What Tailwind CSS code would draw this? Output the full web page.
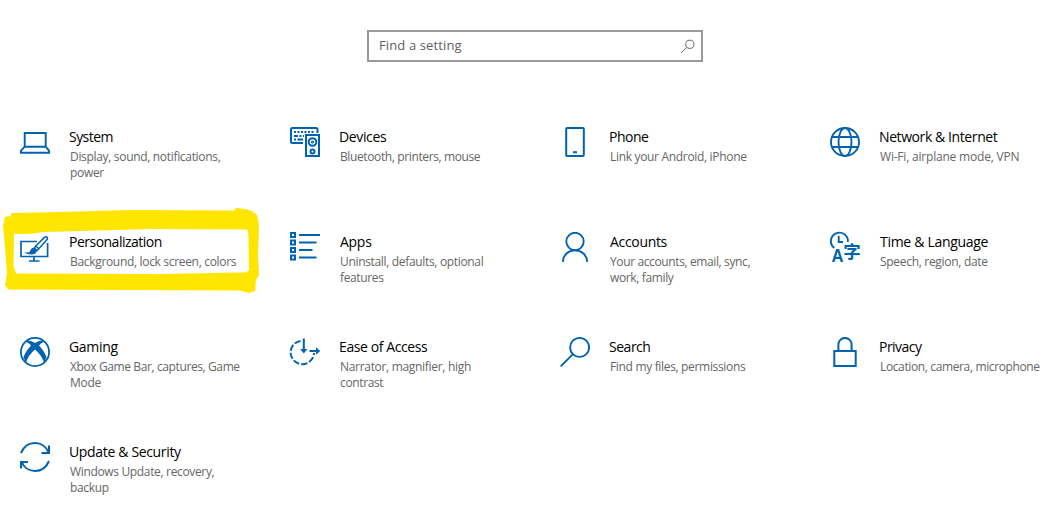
<!DOCTYPE html>
<html lang="en">
<head>
<meta charset="utf-8">
<title>Settings</title>
<script src="https://cdn.jsdelivr.net/npm/@tailwindcss/browser@4"></script>
</head>
<body class="relative h-[510px] w-[1048px] overflow-hidden bg-white font-['Open_Sans','Noto_Sans',sans-serif] text-black">
<svg class="absolute left-0 top-[200px]" width="270" height="100" viewBox="0 0 270 100"><path fill="#ffe600" fill-rule="evenodd" d="M11 14 Q12 12.500 16 13 L77 11.500 L130 10 L234 10.500 L236 8 L245 9 L252 11 L257 15 L259 24 L258 55 L259 75 L256 80 L255 91 L249 93 L240 90.500 L8 89.500 L5 85 L7 73 L5 48 L3 26 L5 17 L11 16Z M14 33.500 Q30 35 43 32 L82 31 L150 29 L247 29.500 Q249 32 248.500 45 L249 70 Q247 73 240 72.500 L160 74 L16 73.500 L13.500 66Z"/></svg>
<main class="relative flex flex-col">
  <label class="mt-[30px] ml-[367px] flex h-8 w-[336px] items-center justify-between border-2 border-[#999] pr-[6px] pl-[10px]">
    <span class="text-[13px] tracking-[0.12px] text-[#606060]">Find a setting</span>
    <svg width="15" height="15" viewBox="0 0 15 15" fill="none" stroke="#666" stroke-width="1"><circle cx="9.800" cy="5.300" r="4.100"/><path d="M6.800 8.300 1.300 13.800"/></svg>
  </label>
  <div class="mt-[65px] ml-5 grid grid-cols-[repeat(4,270px)] grid-rows-[105px_105px_105px_68px]">
    <section class="flex gap-[19px]">
      <svg class="size-[30px] shrink-0" viewBox="0 0 30 30" fill="none" stroke="#0063b1" stroke-width="1.900"><path d="M4.700 20V6h21v14M4.700 19.700h21L29 23.600v2.200H1v-2.200Z"/></svg>
      <div><h2 class="text-[14px] leading-5 tracking-[-0.55px]">System</h2><p class="mt-[2px] pl-px text-[12px] leading-4 tracking-[-0.32px] text-[#666]">Display, sound, notifications,<br>power</p></div>
    </section>
    <section class="flex gap-[19px]">
      <svg class="size-[30px] shrink-0" viewBox="0 0 30 30" fill="none" stroke="#0063b1" stroke-width="2"><path d="M13 16H2.500Q1 16 1 14.500v-12Q1 1 2.500 1H26q1.500 0 1.500 1.500V6"/><path d="M4 5h2m1.500 0h2m1.500 0h2m1.500 0h2m1.500 0h2m1.500 0h2M4 9h4m1.500 0h2m1.500 0h1M4 12.500h2m1.500 0H13"/><path d="M16 8h13v21H16z"/><circle cx="22.500" cy="15" r="3.800"/><circle cx="22.500" cy="15" r=".6"/><circle cx="22.500" cy="24.500" r="2"/></svg>
      <div><h2 class="text-[14px] leading-5 tracking-[-0.37px]">Devices</h2><p class="mt-[2px] pl-px text-[12px] leading-4 tracking-[-0.38px] text-[#666]">Bluetooth, printers, mouse</p></div>
    </section>
    <section class="flex gap-[19px]">
      <svg class="size-[30px] shrink-0" viewBox="0 0 30 30" fill="none" stroke="#0063b1" stroke-width="2"><rect x="6.200" y="1" width="17.600" height="28" rx="1"/><path d="M13 25.200h4"/></svg>
      <div><h2 class="text-[14px] leading-5 tracking-[-0.48px]">Phone</h2><p class="mt-[2px] pl-px text-[12px] leading-4 tracking-[-0.32px] text-[#666]">Link your Android, iPhone</p></div>
    </section>
    <section class="flex gap-[19px]">
      <svg class="size-[30px] shrink-0" viewBox="0 0 30 30" fill="none" stroke="#0063b1" stroke-width="1.900"><circle cx="15" cy="15" r="14"/><ellipse cx="15" cy="15" rx="6.500" ry="14"/><path d="M2 10h26M2 20h26"/></svg>
      <div><h2 class="text-[14px] leading-5 tracking-[-0.41px]">Network &amp; Internet</h2><p class="mt-[2px] pl-px text-[12px] leading-4 tracking-[-0.2px] text-[#666]">Wi-Fi, airplane mode, VPN</p></div>
    </section>
    <section class="flex gap-[19px]">
      <svg class="size-[30px] shrink-0" viewBox="0 0 30 30" fill="none" stroke="#0063b1" stroke-width="1.700"><path d="M17 9.500H1V24.500h26.600V11M14 24.500v4M9 29h10.500"/><path stroke-width="1.500" d="m15.800 14 8.400-8.400q1.700-1.500 2.800-.4t-.3 2.900l-7.900 8.700z"/><path stroke-width="1.500" d="m15.800 14-1.500 2.200 2.600 2.600 2-2"/><path fill="#0063b1" stroke="none" d="M4 20.500h4.500q1.500-.5 2-2.500 1-2.500 3.500-2.300 3 .5 2.800 3.300-.8 3.500-5.300 3.500-4.500 0-7.500-2"/></svg>
      <div><h2 class="text-[14px] leading-5 tracking-[-0.51px]">Personalization</h2><p class="mt-[2px] pl-px text-[12px] leading-4 tracking-[-0.32px] text-[#666]">Background, lock screen, colors</p></div>
    </section>
    <section class="flex gap-[19px]">
      <svg class="size-[30px] shrink-0" viewBox="0 0 30 30" fill="none" stroke="#0063b1" stroke-width="2"><path d="M1 1h4v4H1zM1 8.500h4v4H1zM1 16h4v4H1zM1 23.500h4v4H1zM9 2.900h21M9 10.400h17.500M9 17.900h13.500M9 25.400h17.500"/></svg>
      <div><h2 class="pl-px text-[14px] leading-5 tracking-[-0.28px]">Apps</h2><p class="mt-[2px] pl-px text-[12px] leading-4 tracking-[-0.33px] text-[#666]">Uninstall, defaults, optional<br><span class="tracking-[-0.37px]">features</span></p></div>
    </section>
    <section class="flex gap-[19px]">
      <svg class="size-[30px] shrink-0" viewBox="0 0 30 30" fill="none" stroke="#0063b1" stroke-width="1.900"><circle cx="15" cy="9.500" r="8.700"/><path d="M2.900 30C3 23 8.500 18.200 15 18.200S27 23 27.100 30"/></svg>
      <div><h2 class="pl-px text-[14px] leading-5 tracking-[-0.32px]">Accounts</h2><p class="mt-[2px] pl-px text-[12px] leading-4 tracking-[-0.38px] text-[#666]">Your accounts, email, sync,<br><span class="tracking-[-0.36px]">work, family</span></p></div>
    </section>
    <section class="flex gap-[19px]">
      <svg class="size-[30px] shrink-0 overflow-visible" viewBox="0 0 30 30" fill="none" stroke="#0063b1" stroke-width="1.900"><path d="M4.300 16A8.500 8.500 0 1 1 17.900 10M8.700 4v6H13"/><text x="1.500" y="30" textLength="12" lengthAdjust="spacingAndGlyphs" fill="#0063b1" stroke="none" font-family="Liberation Sans" font-weight="700" font-size="17.500">A</text><text x="13.300" y="26" fill="#0063b1" stroke="none" font-family="Noto Sans CJK SC" font-weight="700" font-size="17.500">字</text></svg>
      <div><h2 class="pl-px text-[14px] leading-5 tracking-[-0.3px]">Time &amp; Language</h2><p class="mt-[2px] pl-px text-[12px] leading-4 tracking-[-0.3px] text-[#666]">Speech, region, date</p></div>
    </section>
    <section class="flex gap-[19px]">
      <svg class="size-[30px] shrink-0" viewBox="0 0 30 30" fill="none" stroke="#0063b1" stroke-width="1.800"><circle cx="15" cy="15" r="14.100"/><path fill="#0063b1" stroke="none" d="M7 3.500Q11 3 15 6q4-3 8-2.500L24 5q-2.500 0-5 3.500 6 6.500 7.500 12L24 25.500Q21.500 18 15 12.500 8.500 18 6 25.500L3.500 20.500Q5 15 11 8.500 8.500 5 6 5Z"/></svg>
      <div><h2 class="text-[14px] leading-5 tracking-[-0.32px]">Gaming</h2><p class="mt-[2px] pl-px text-[12px] leading-4 tracking-[-0.39px] text-[#666]">Xbox Game Bar, captures, Game<br><span class="tracking-[-0.28px]">Mode</span></p></div>
    </section>
    <section class="flex gap-[19px]">
      <svg class="size-[30px] shrink-0 overflow-visible" viewBox="0 0 30 30" fill="none" stroke="#0063b1" stroke-width="2"><path stroke-dasharray="6.300 2.100" d="M10.500 3.900A11.700 11.700 0 1 0 24 16"/><path d="M13.800 1.500V14M19.500 14H28"/><path fill="#0063b1" stroke="none" d="M10.200 12h7.200l-3.600 4.500zM26 10.200v7.600l4.200-3.800z"/></svg>
      <div><h2 class="text-[14px] leading-5 tracking-[-0.4px]">Ease of Access</h2><p class="mt-[2px] pl-px text-[12px] leading-4 tracking-[-0.31px] text-[#666]">Narrator, magnifier, high<br><span class="tracking-[-0.36px]">contrast</span></p></div>
    </section>
    <section class="flex gap-[19px]">
      <svg class="size-[30px] shrink-0" viewBox="0 0 30 30" fill="none" stroke="#0063b1" stroke-width="1.900"><circle cx="19.600" cy="10.400" r="9.500"/><path d="M12.900 17.100.7 29.300"/></svg>
      <div><h2 class="text-[14px] leading-5 tracking-[-0.48px]">Search</h2><p class="mt-[2px] pl-px text-[12px] leading-4 tracking-[-0.33px] text-[#666]">Find my files, permissions</p></div>
    </section>
    <section class="flex gap-[19px]">
      <svg class="size-[30px] shrink-0" viewBox="0 0 30 30" fill="none" stroke="#0063b1" stroke-width="2"><path d="M4.300 14h21.400v15H4.300zM8.400 14V7.500a6.600 6.600 0 0 1 13.200 0V14"/></svg>
      <div><h2 class="text-[14px] leading-5 tracking-[-0.52px]">Privacy</h2><p class="mt-[2px] pl-px text-[12px] leading-4 tracking-[-0.37px] text-[#666]">Location, camera, microphone</p></div>
    </section>
    <section class="flex gap-[19px]">
      <svg class="size-[30px] shrink-0" viewBox="0 0 30 30" fill="none" stroke="#0063b1" stroke-width="2"><path d="M1 11C3.500 5 8.500 1 15 1s11.500 4 13.500 9.500M29 3.500V11h-7.500M29 19c-2.500 6-7.500 10-14 10S3.500 25 1.500 19.500M1 26.500V20h7"/></svg>
      <div><h2 class="text-[14px] leading-5 tracking-[-0.34px]">Update &amp; Security</h2><p class="mt-[2px] pl-px text-[12px] leading-4 tracking-[-0.34px] text-[#666]">Windows Update, recovery,<br>backup</p></div>
    </section>
  </div>
</main>
</body>
</html>
